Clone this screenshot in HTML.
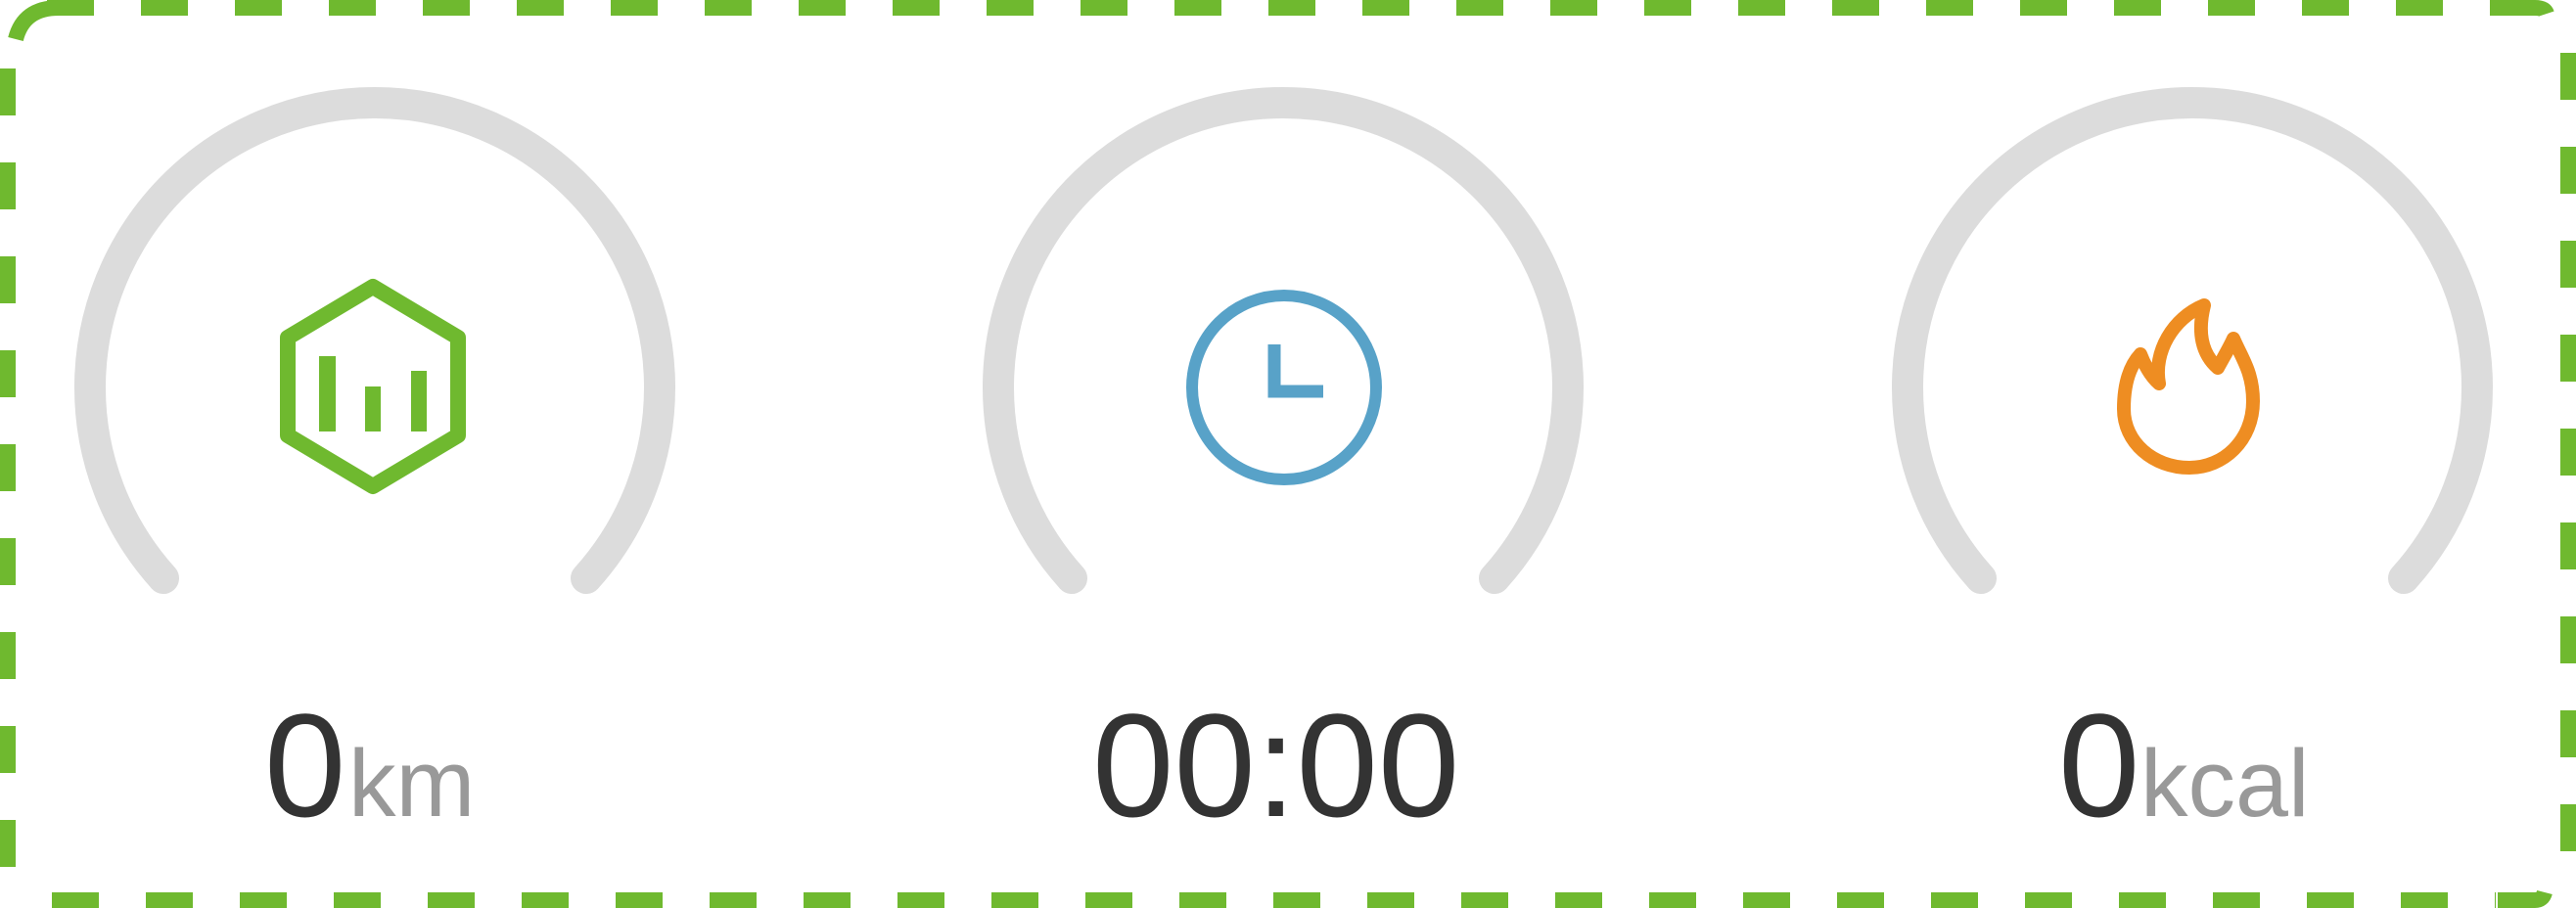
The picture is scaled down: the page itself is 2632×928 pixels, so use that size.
<!DOCTYPE html>
<html><head><meta charset="utf-8"><style>html,body{margin:0;padding:0;background:#fff;width:2632px;height:928px;overflow:hidden}</style></head>
<body>
<svg width="2632" height="928" viewBox="0 0 2632 928" xmlns="http://www.w3.org/2000/svg" style="display:block">
<g stroke="#6fb92f" stroke-width="16" fill="none">
<line x1="48" y1="8" x2="2545" y2="8" stroke-dasharray="48 48"/>
<line x1="53" y1="920" x2="2550" y2="920" stroke-dasharray="48 48"/>
<line x1="8" y1="70" x2="8" y2="887" stroke-dasharray="48 48"/>
<line x1="2624" y1="54" x2="2624" y2="880" stroke-dasharray="48 48"/>
<path d="M16,40 Q24,8 60,8"/>
<path d="M2545,8 L2590,8 Q2600,8 2602,14"/>
<path d="M2552,920 L2590,920 Q2598,920 2600,912"/>
</g>
<g stroke="#dcdcdc" stroke-width="32" fill="none" stroke-linecap="round">
<path d="M167,591 A291,291 0 1 1 599,591"/>
<path d="M1095,591 A291,291 0 1 1 1527,591"/>
<path d="M2024,591 A291,291 0 1 1 2456,591"/>
</g>
<g fill="none" stroke="#6fb92f" stroke-width="16" stroke-linejoin="round">
<path d="M381,293 L468,345 L468,445 L381,497 L294,445 L294,345 Z"/>
</g>
<g fill="#6fb92f">
<rect x="326" y="364" width="17" height="77"/>
<rect x="373" y="395" width="16" height="46"/>
<rect x="420" y="379" width="16" height="62"/>
</g>
<circle cx="1312" cy="396" r="94" fill="none" stroke="#58a2c8" stroke-width="12"/>
<path d="M1302,352 L1302,400 L1352,400" fill="none" stroke="#58a2c8" stroke-width="13" stroke-linejoin="miter"/>
<path d="M2206,392 C2200,360 2220,325 2252,312 C2245,340 2250,362 2266,376 C2272,365 2278,355 2282,346 C2290,365 2302,380 2302,410 C2302,450 2272,478 2237,478 C2200,478 2170,452 2170,418 C2170,395 2175,375 2187,362 C2192,375 2198,385 2206,392 Z" fill="none" stroke="#ee8d22" stroke-width="14" stroke-linejoin="round"/>
<g font-family="Liberation Sans, sans-serif">
<text x="270" y="834" font-size="150" fill="#333">0</text>
<text x="356" y="834" font-size="97" fill="#999">km</text>
<text x="1116" y="834" font-size="150" fill="#333">00:00</text>
<text x="2103" y="834" font-size="150" fill="#333">0</text>
<text x="2187" y="834" font-size="97" fill="#999">kcal</text>
</g>
</svg>
</body></html>
